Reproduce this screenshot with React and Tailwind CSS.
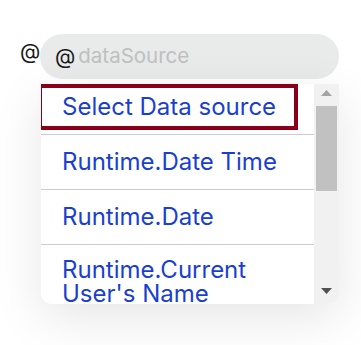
export default function App() {
  const items = ['Runtime.Date Time', 'Runtime.Date', "Runtime.Current User's Name"];

  return (
    <div className="w-[361px] h-[345px] bg-white overflow-hidden" style={{ fontFamily: 'Inter, "Noto Sans", sans-serif' }}>
      <div className="flex pt-[34px] pl-[20px]">
        <span className="text-[21px] leading-[21px] text-[#1a1a1a] mt-[7px] w-[20px]">@</span>

        <div className="flex flex-col">
          {/* input pill */}
          <div className="w-[299px] h-[45px] rounded-full bg-[#e9eaea] flex items-center pl-[15px]">
            <span className="text-[21px] text-[#1a1a1a]">@</span>
            <span className="text-[20.5px] text-[#c0c0c0] ml-[3px]">dataSource</span>
          </div>

          {/* dropdown */}
          <div className="mt-[5px] ml-[1px] w-[298px] h-[220px] rounded-b-[10px] overflow-hidden bg-white flex shadow-[0_14px_50px_rgba(0,0,0,0.1)]">
            <div className="flex-1 flex flex-col">
              <div className="h-[51px] border-b border-[#cccccc] shrink-0">
                <div className="ml-[-3px] w-[260px] h-[46px] border-4 border-[#8b0019] flex items-center pl-[20px] text-[24px] leading-[24px] text-[#1a3fd0]">
                  Select Data source
                </div>
              </div>
              {items.map((t, i) => (
                <div
                  key={t}
                  className={`shrink-0 pl-[21px] pr-[28px] text-[24px] leading-[24px] text-[#1a3fd0] ${i < 2 ? 'h-[55px] flex items-center border-b border-[#cccccc]' : 'pt-[13px]'}`}
                >
                  {t}
                </div>
              ))}
            </div>

            {/* scrollbar */}
            <div className="w-[25px] bg-[#f1f1f1] flex flex-col items-center">
              <svg className="mt-[6px]" width="11" height="6" viewBox="0 0 11 6">
                <path d="M5.5 0 L11 6 L0 6 Z" fill="#a3a3a3" />
              </svg>
              <div className="mt-[10px] w-[21px] h-[85px] bg-[#c1c1c1]" />
              <div className="flex-1" />
              <svg className="mb-[10px]" width="11" height="6" viewBox="0 0 11 6">
                <path d="M0 0 L11 0 L5.5 6 Z" fill="#505050" />
              </svg>
            </div>
          </div>
        </div>
      </div>
    </div>
  );
}
